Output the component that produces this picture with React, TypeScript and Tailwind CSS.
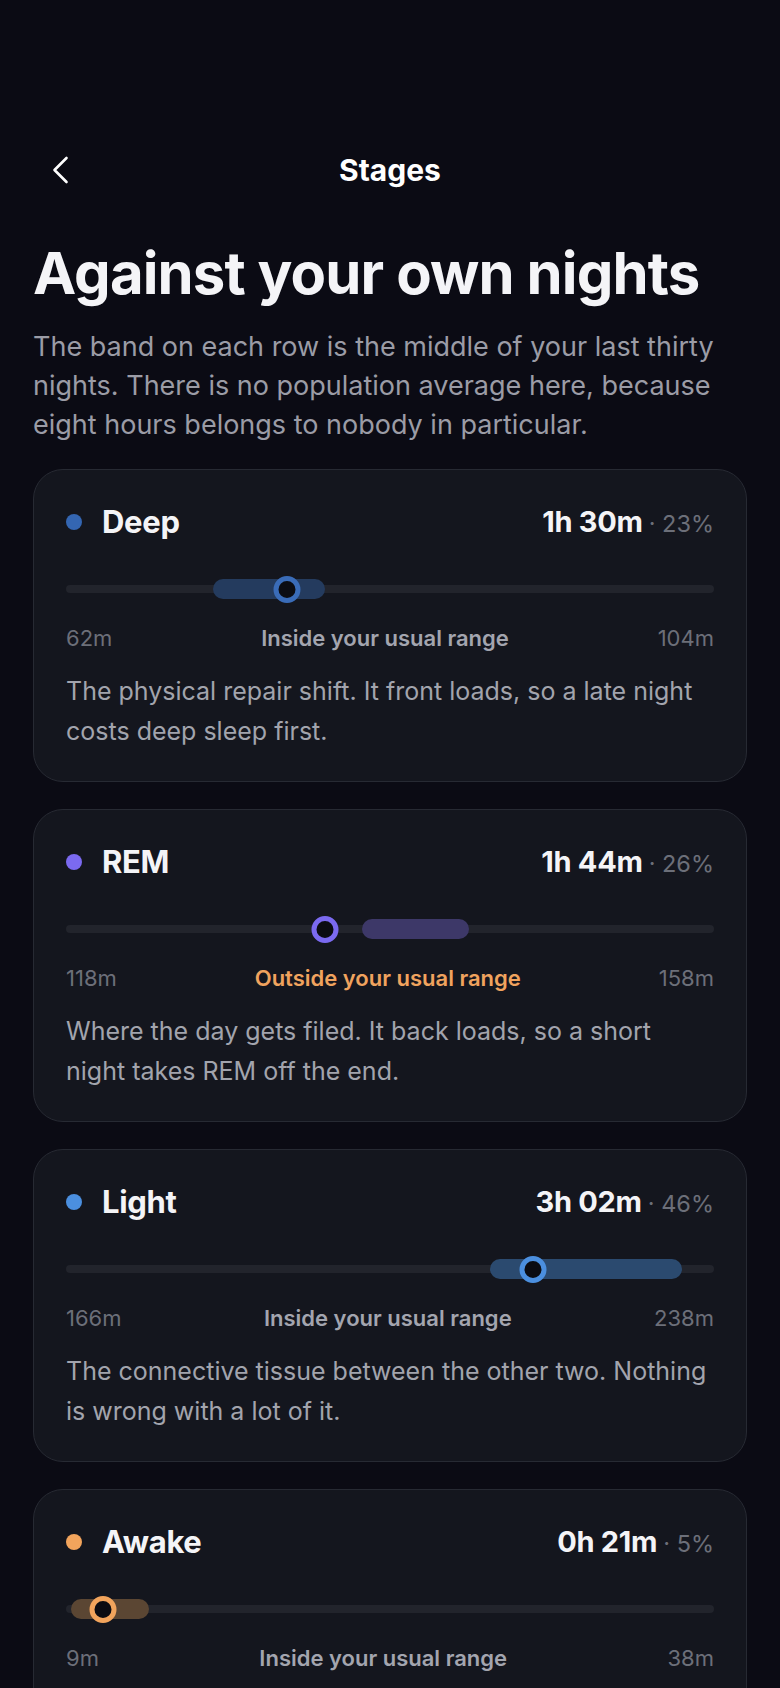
import React from "react";

type Stage = {
  name: string;
  dot: string;
  band: string;
  thumb: string;
  time: string;
  pct: string;
  low: number;
  high: number;
  value: number;
  inside: boolean;
  note: string;
};

const stages: Stage[] = [
  {
    name: "Deep",
    dot: "bg-[#3466b2]",
    band: "bg-[#243b5e]",
    thumb: "border-[#3a6cb8]",
    time: "1h 30m",
    pct: "23%",
    low: 62,
    high: 104,
    value: 90,
    inside: true,
    note: "The physical repair shift. It front loads, so a late night costs deep sleep first.",
  },
  {
    name: "REM",
    dot: "bg-[#7b6af0]",
    band: "bg-[#3d3868]",
    thumb: "border-[#7b6af0]",
    time: "1h 44m",
    pct: "26%",
    low: 118,
    high: 158,
    value: 104,
    inside: false,
    note: "Where the day gets filed. It back loads, so a short night takes REM off the end.",
  },
  {
    name: "Light",
    dot: "bg-[#4b8fdf]",
    band: "bg-[#2b4a6f]",
    thumb: "border-[#4b8fdf]",
    time: "3h 02m",
    pct: "46%",
    low: 166,
    high: 238,
    value: 182,
    inside: true,
    note: "The connective tissue between the other two. Nothing is wrong with a lot of it.",
  },
  {
    name: "Awake",
    dot: "bg-[#f2a45c]",
    band: "bg-[#5b4633]",
    thumb: "border-[#f2a45c]",
    time: "0h 21m",
    pct: "5%",
    low: 9,
    high: 38,
    value: 21,
    inside: true,
    note: "Short wakes between cycles. Most of them are never remembered.",
  },
];

// scale used by the range tracks
const pos = (v: number) => Math.max(0, Math.min(1, (v - 7) / 243)) * 100;

function StageCard({ s }: { s: Stage }) {
  const left = pos(s.low);
  const right = pos(s.high);
  const mark = pos(s.value);

  return (
    <div className="rounded-[30px] border border-[#272a33] bg-[#14161e] px-8 pt-[34px] pb-[30px]">
      <div className="flex h-9 items-center justify-between">
        <div className="flex items-center gap-[20px]">
          <span className={`h-4 w-4 rounded-full ${s.dot}`} />
          <span className="text-[31px] font-bold text-[#f4f4f7] tracking-[-0.01em]">{s.name}</span>
        </div>
        <div className="flex items-baseline">
          <span className="text-[29px] font-bold text-[#f4f4f7] tracking-[-0.01em]">{s.time}</span>
          <span className="ml-[6px] text-[23.5px] text-[#6c6f79]">· {s.pct}</span>
        </div>
      </div>

      <div className="relative mt-[35px] h-7">
        <div className="absolute left-0 right-0 top-[10px] h-2 rounded-full bg-[#22242c]" />
        <div
          className={`absolute top-1 h-5 rounded-full ${s.band}`}
          style={{ left: `${left}%`, width: `${right - left}%` }}
        />
        <div
          className={`absolute top-[0.5px] h-[27px] w-[27px] -translate-x-1/2 rounded-full border-[5px] bg-[#0b0c12] ${s.thumb}`}
          style={{ left: `${mark}%` }}
        />
      </div>

      <div className="mt-[21px] flex h-7 items-center justify-between text-[22px]">
        <span className="text-[#6c6f79]">{s.low}m</span>
        <span className={`font-semibold ${s.inside ? "text-[#a3a5af]" : "text-[#f0a35e]"}`}>
          {s.inside ? "Inside your usual range" : "Outside your usual range"}
        </span>
        <span className="text-[#6c6f79]">{s.high}m</span>
      </div>

      <p className="mt-[19px] text-[25px] leading-[40px] text-[#a2a4ad]">{s.note}</p>
    </div>
  );
}

export default function App() {
  return (
    <div className="min-h-screen w-full bg-[#0b0b14] font-['Inter',sans-serif] px-[33px] pt-[146px] pb-10">
      <div className="relative flex h-12 items-center justify-center">
        <button className="absolute left-[19px] top-[10px] text-white">
          <svg width="17" height="28" viewBox="0 0 17 28" fill="none">
            <polyline
              points="14.5,2 2.5,14 14.5,26"
              stroke="currentColor"
              strokeWidth="2.6"
              strokeLinecap="round"
              strokeLinejoin="round"
            />
          </svg>
        </button>
        <h2 className="text-[30px] font-bold text-white">Stages</h2>
      </div>

      <h1 className="mt-[47px] text-[58px] font-bold leading-[64px] tracking-[-0.015em] text-[#f4f4f7]">
        Against your own nights
      </h1>
      <p className="mt-[22px] text-[27px] leading-[39px] text-[#9b9ca6]">
        The band on each row is the middle of your last thirty nights. There is no population average here, because
        eight hours belongs to nobody in particular.
      </p>

      <div className="mt-[25px] flex flex-col gap-[27px]">
        {stages.map((s) => (
          <StageCard key={s.name} s={s} />
        ))}
      </div>
    </div>
  );
}
